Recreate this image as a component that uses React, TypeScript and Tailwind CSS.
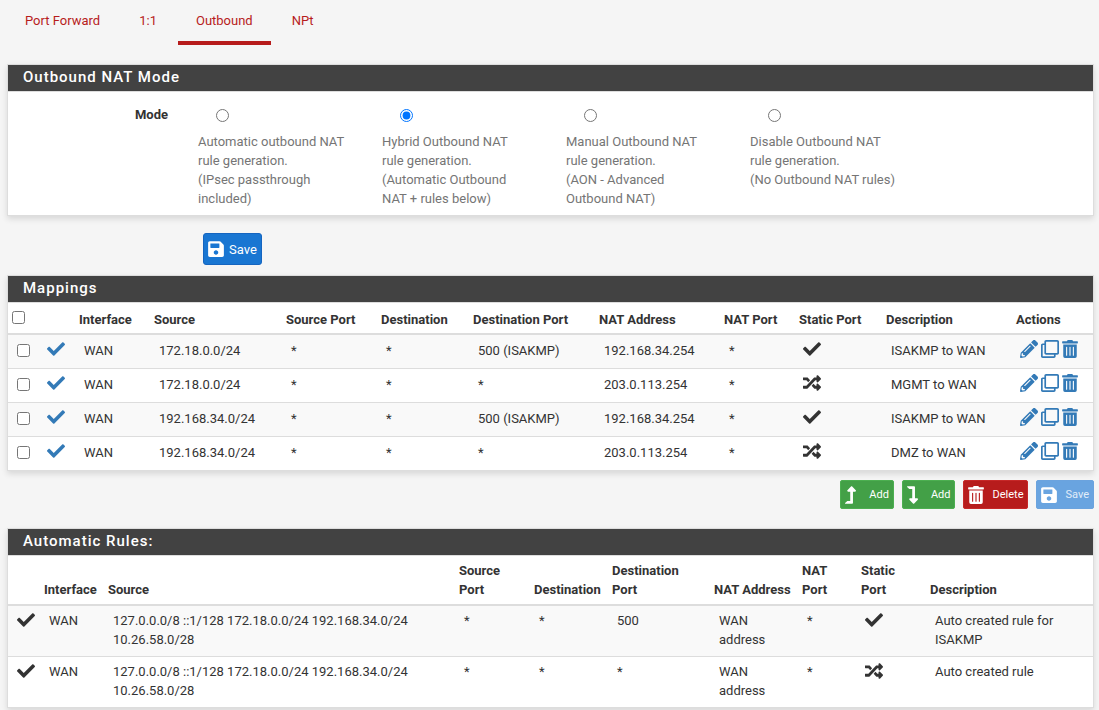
import type { ReactNode } from 'react'
import {
  FaCheck,
  FaLevelDownAlt,
  FaLevelUpAlt,
  FaPencilAlt,
  FaRandom,
  FaRegClone,
  FaSave,
  FaTrashAlt,
} from 'react-icons/fa'

interface Mapping {
  source: string
  destinationPort: string
  natAddress: string
  staticPort: boolean
  description: string
}

const tabs = ['Port Forward', '1:1', 'Outbound', 'NPt']

const modes = [
  { id: 'automatic', lines: ['Automatic outbound NAT rule generation.', '(IPsec passthrough included)'] },
  { id: 'hybrid', lines: ['Hybrid Outbound NAT rule generation.', '(Automatic Outbound NAT + rules below)'] },
  { id: 'advanced', lines: ['Manual Outbound NAT rule generation.', '(AON - Advanced Outbound NAT)'] },
  { id: 'disabled', lines: ['Disable Outbound NAT rule generation.', '(No Outbound NAT rules)'] },
]

const mappings: Mapping[] = [
  { source: '172.18.0.0/24', destinationPort: '500 (ISAKMP)', natAddress: '192.168.34.254', staticPort: true, description: 'ISAKMP to WAN' },
  { source: '172.18.0.0/24', destinationPort: '*', natAddress: '203.0.113.254', staticPort: false, description: 'MGMT to WAN' },
  { source: '192.168.34.0/24', destinationPort: '500 (ISAKMP)', natAddress: '192.168.34.254', staticPort: true, description: 'ISAKMP to WAN' },
  { source: '192.168.34.0/24', destinationPort: '*', natAddress: '203.0.113.254', staticPort: false, description: 'DMZ to WAN' },
]

const automaticSource = '127.0.0.0/8 ::1/128 172.18.0.0/24 192.168.34.0/24 10.26.58.0/28'

const automaticRules = [
  { destinationPort: '500', staticPort: true, description: 'Auto created rule for ISAKMP' },
  { destinationPort: '*', staticPort: false, description: 'Auto created rule' },
]

const th = 'px-[5px] pt-[5px] pb-1 text-left align-bottom font-bold'
const td = 'pl-[10px] pr-[5px] pt-[6px] pb-2 align-top'
const tdIcon = 'pl-[9px] pr-[5px] pt-[5px] pb-[9px] align-top'
const autoTh = 'px-[5px] py-[5px] text-left align-bottom font-bold'
const autoTd = 'pl-[10px] pr-[5px] pt-[5px] pb-[7px] align-top'
const autoTdIcon = 'pl-[9px] pr-[5px] pt-[5px] pb-[7px] align-top'
const row = 'border-b border-[#ddd] last:border-b-0 odd:bg-[#f9f9f9]'

function Panel({ title, children }: { title: string; children: ReactNode }) {
  return (
    <section className="border border-[#ddd] bg-white shadow-[0_3px_6px_rgba(0,0,0,0.12)]">
      <h2 className="h-[27px] border-b border-[#ddd] bg-[#424242] pl-[15px] text-[15px] leading-[24px] font-medium tracking-[1px] text-white">
        {title}
      </h2>
      {children}
    </section>
  )
}

function StaticPortIcon({ on }: { on: boolean }) {
  return on ? <FaCheck className="size-[18px]" /> : <FaRandom className="size-[18px]" />
}

export default function App() {
  return (
    <main className="min-h-screen bg-[#f5f5f5] pr-[5px] pb-1 pl-[7px] font-['Roboto',sans-serif] text-[13px] leading-[19px] text-[#333]">
      <nav className="flex gap-[3px]">
        {tabs.map((tab) => (
          <a
            key={tab}
            href="#"
            className={
              tab === 'Outbound'
                ? 'border-b-4 border-[#b71c1c] px-[18px] py-[11px] text-[#b71c1c]'
                : 'border-b-4 border-transparent px-[18px] py-[11px] text-[#b71c1c]'
            }
          >
            {tab}
          </a>
        ))}
      </nav>

      <form className="pt-[19px]">
        <Panel title="Outbound NAT Mode">
          <fieldset aria-labelledby="mode-label" className="flex pt-[13px] pb-[7px]">
            <span id="mode-label" className="w-[160px] shrink-0 text-right font-bold">
              Mode
            </span>
            <div className="ml-[30px] grid flex-1 grid-cols-[repeat(4,184px)]">
              {modes.map((mode) => (
                <label key={mode.id} className="block pr-[34px] text-[#757575]">
                  <input
                    type="radio"
                    name="mode"
                    value={mode.id}
                    defaultChecked={mode.id === 'hybrid'}
                    className="mt-1 ml-[18px] block size-[13px]"
                  />
                  <span className="mt-[10px] block">
                    {mode.lines.map((line) => (
                      <span key={line} className="block">
                        {line}
                      </span>
                    ))}
                  </span>
                </label>
              ))}
            </div>
          </fieldset>
        </Panel>
        <button
          type="button"
          className="mt-[17px] ml-[196px] flex h-8 items-center gap-[5px] rounded-[3px] border border-[#1565c0] bg-[#1976d2] px-1 text-white"
        >
          <FaSave className="h-[18px] w-4" />
          Save
        </button>
      </form>

      <div className="pt-[10px]">
        <Panel title="Mappings">
          <table className="w-full table-fixed border-collapse">
            <colgroup>
              <col className="w-[30px]" />
              <col className="w-[36px]" />
              <col className="w-[75px]" />
              <col className="w-[132px]" />
              <col className="w-[95px]" />
              <col className="w-[92px]" />
              <col className="w-[126px]" />
              <col className="w-[125px]" />
              <col className="w-[75px]" />
              <col className="w-[87px]" />
              <col className="w-[130px]" />
              <col className="w-[82px]" />
            </colgroup>
            <thead className="border-b-2 border-[#ddd]">
              <tr className="h-[31px]">
                <th className="px-1 pt-2 text-left align-top">
                  <input type="checkbox" aria-label="Select all mappings" className="block size-[13px]" />
                </th>
                <th />
                <th className={th}>Interface</th>
                <th className={th}>Source</th>
                <th className={th}>Source Port</th>
                <th className={th}>Destination</th>
                <th className={th}>Destination Port</th>
                <th className={th}>NAT Address</th>
                <th className={th}>NAT Port</th>
                <th className={th}>Static Port</th>
                <th className={th}>Description</th>
                <th className={th}>Actions</th>
              </tr>
            </thead>
            <tbody>
              {mappings.map((mapping, index) => (
                <tr key={index} className={row}>
                  <td className={tdIcon}>
                    <input
                      type="checkbox"
                      aria-label={`Select mapping ${index + 1}`}
                      className="mt-1 block size-[13px]"
                    />
                  </td>
                  <td className={`${tdIcon} text-[#337ab7]`}>
                    <FaCheck className="size-[18px]" />
                  </td>
                  <td className={td}>WAN</td>
                  <td className={td}>{mapping.source}</td>
                  <td className={td}>*</td>
                  <td className={td}>*</td>
                  <td className={td}>{mapping.destinationPort}</td>
                  <td className={td}>{mapping.natAddress}</td>
                  <td className={td}>*</td>
                  <td className={tdIcon}>
                    <StaticPortIcon on={mapping.staticPort} />
                  </td>
                  <td className={td}>{mapping.description}</td>
                  <td className={tdIcon}>
                    <div className="flex gap-[3px] text-[#337ab7]">
                      <a href="#" aria-label="Edit mapping">
                        <FaPencilAlt className="size-[18px]" />
                      </a>
                      <a href="#" aria-label="Copy mapping">
                        <FaRegClone className="size-[18px]" />
                      </a>
                      <a href="#" aria-label="Delete mapping">
                        <FaTrashAlt className="h-[18px] w-4" />
                      </a>
                    </div>
                  </td>
                </tr>
              ))}
            </tbody>
          </table>
        </Panel>

        <div className="flex justify-end gap-2 pt-[9px] text-[11px] text-white">
          <button
            type="button"
            className="flex h-[29px] items-center gap-[13px] rounded-[2px] border border-[#4caf50] bg-[#43a047] px-1"
          >
            <FaLevelUpAlt className="h-[18px] w-[11px]" />
            Add
          </button>
          <button
            type="button"
            className="flex h-[29px] items-center gap-[13px] rounded-[2px] border border-[#4caf50] bg-[#43a047] px-1"
          >
            <FaLevelDownAlt className="h-[18px] w-[11px]" />
            Add
          </button>
          <button
            type="button"
            className="flex h-[29px] items-center gap-2 rounded-[2px] border border-[#c62828] bg-[#b71c1c] px-1"
          >
            <FaTrashAlt className="h-[18px] w-4" />
            Delete
          </button>
          <button
            type="button"
            disabled
            className="flex h-[29px] items-center gap-2 rounded-[2px] border border-[#6ba3de] bg-[#69a4e0] px-1 text-[#e1edf9]"
          >
            <FaSave className="h-[18px] w-4 text-white" />
            Save
          </button>
        </div>
      </div>

      <div className="pt-[19px]">
        <Panel title="Automatic Rules:">
          <table className="w-full table-fixed border-collapse">
            <colgroup>
              <col className="w-[31px]" />
              <col className="w-[64px]" />
              <col className="w-[351px]" />
              <col className="w-[75px]" />
              <col className="w-[78px]" />
              <col className="w-[102px]" />
              <col className="w-[88px]" />
              <col className="w-[59px]" />
              <col className="w-[69px]" />
              <col className="w-[168px]" />
            </colgroup>
            <thead className="border-b-2 border-[#ddd]">
              <tr>
                <th />
                <th className={autoTh}>Interface</th>
                <th className={autoTh}>Source</th>
                <th className={autoTh}>Source Port</th>
                <th className={autoTh}>Destination</th>
                <th className={autoTh}>Destination Port</th>
                <th className={`${autoTh} whitespace-nowrap`}>NAT Address</th>
                <th className={autoTh}>NAT Port</th>
                <th className={autoTh}>Static Port</th>
                <th className={autoTh}>Description</th>
              </tr>
            </thead>
            <tbody>
              {automaticRules.map((rule) => (
                <tr key={rule.description} className={row}>
                  <td className={autoTdIcon}>
                    <FaCheck className="size-[18px]" />
                  </td>
                  <td className={autoTd}>WAN</td>
                  <td className={autoTd}>{automaticSource}</td>
                  <td className={autoTd}>*</td>
                  <td className={autoTd}>*</td>
                  <td className={autoTd}>{rule.destinationPort}</td>
                  <td className={autoTd}>WAN address</td>
                  <td className={autoTd}>*</td>
                  <td className={autoTdIcon}>
                    <StaticPortIcon on={rule.staticPort} />
                  </td>
                  <td className={autoTd}>{rule.description}</td>
                </tr>
              ))}
            </tbody>
          </table>
        </Panel>
      </div>
    </main>
  )
}
